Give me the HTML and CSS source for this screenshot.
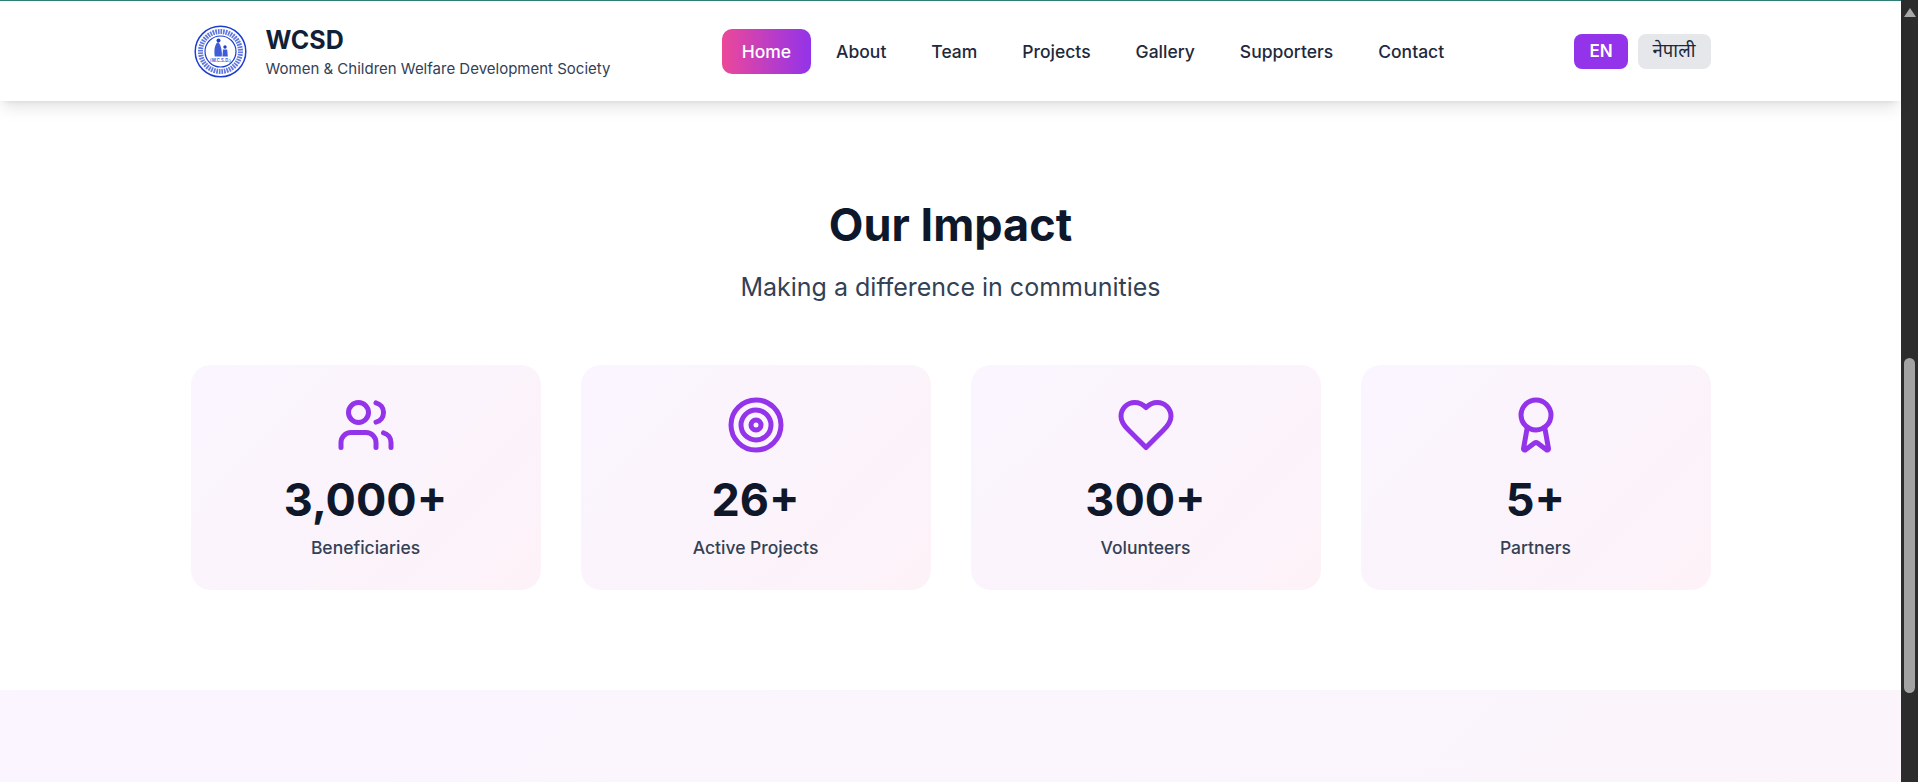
FILE: index.html
```html
<!DOCTYPE html>
<html>
<head>
    <title>WCSD</title>
    <meta charset="utf-8">
    <link rel="stylesheet" href="styles.css">
</head>
<body>
    <div class="page">
        <!-- Header -->
        <header class="site-header">
            <div class="header-inner">
                <a class="brand" href="#">
                    <svg class="brand-logo" viewBox="0 0 59 59" fill="none" stroke="#1d3fd1">
                        <circle cx="29.5" cy="29.5" r="25.3" stroke-width="1.5"/>
                        <circle cx="29.5" cy="29.5" r="20" stroke-width="5" stroke-dasharray="1.7 0.9" opacity="0.7"/>
                        <circle cx="29.5" cy="29.5" r="15.5" stroke-width="1.2"/>
                        <circle cx="27.5" cy="18.5" r="2" fill="#1d3fd1" stroke="none"/>
                        <path d="M26 20.5c-2.400 3-3.200 8.500-2.200 14h7c.5-4.500-.5-10.500-3-14z" fill="#1d3fd1" stroke="none" opacity="0.85"/>
                        <circle cx="34" cy="25" r="1.700" fill="#1d3fd1" stroke="none"/>
                        <path d="M32 27.500h4.200l.6 7h-5.400z" fill="#1d3fd1" stroke="none" opacity="0.85"/>
                        <text class="logo-text" x="29.500" y="39.800" text-anchor="middle">(W.C.S.D.)</text>
                    </svg>
                    <div class="brand-text">
                        <span class="brand-name">WCSD</span>
                        <span class="brand-full">Women &amp; Children Welfare Development Society</span>
                    </div>
                </a>
                <nav class="main-nav">
                    <a class="nav-link active" href="#">Home</a>
                    <a class="nav-link" href="#">About</a>
                    <a class="nav-link" href="#">Team</a>
                    <a class="nav-link" href="#">Projects</a>
                    <a class="nav-link" href="#">Gallery</a>
                    <a class="nav-link" href="#">Supporters</a>
                    <a class="nav-link" href="#">Contact</a>
                </nav>
                <div class="lang-switch">
                    <button class="lang-btn lang-active">EN</button>
                    <button class="lang-btn">नेपाली</button>
                </div>
            </div>
        </header>

        <!-- Our Impact -->
        <section class="impact">
            <h2 class="section-title">Our Impact</h2>
            <p class="section-sub">Making a difference in communities</p>
            <div class="stat-grid">
                <div class="stat-card">
                    <svg class="stat-icon" viewBox="0 0 24 24">
                        <path d="M16 21v-2a4 4 0 0 0-4-4H6a4 4 0 0 0-4 4v2"/>
                        <circle cx="9" cy="7" r="4"/>
                        <path d="M22 21v-2a4 4 0 0 0-3-3.87"/>
                        <path d="M16 3.13a4 4 0 0 1 0 7.75"/>
                    </svg>
                    <div class="stat-number">3,000+</div>
                    <div class="stat-label">Beneficiaries</div>
                </div>
                <div class="stat-card">
                    <svg class="stat-icon" viewBox="0 0 24 24">
                        <circle cx="12" cy="12" r="10"/>
                        <circle cx="12" cy="12" r="6"/>
                        <circle cx="12" cy="12" r="2"/>
                    </svg>
                    <div class="stat-number">26+</div>
                    <div class="stat-label">Active Projects</div>
                </div>
                <div class="stat-card">
                    <svg class="stat-icon" viewBox="0 0 24 24">
                        <path d="M19 14c1.49-1.46 3-3.21 3-5.5A5.5 5.5 0 0 0 16.5 3c-1.76 0-3 .5-4.5 2-1.5-1.5-2.74-2-4.5-2A5.5 5.5 0 0 0 2 8.5c0 2.3 1.5 4.05 3 5.5l7 7Z"/>
                    </svg>
                    <div class="stat-number">300+</div>
                    <div class="stat-label">Volunteers</div>
                </div>
                <div class="stat-card">
                    <svg class="stat-icon" viewBox="0 0 24 24">
                        <path d="m15.477 12.89 1.515 8.526a.5.5 0 0 1-.81.47l-3.58-2.687a1 1 0 0 0-1.197 0l-3.586 2.686a.5.5 0 0 1-.81-.469l1.514-8.526"/>
                        <circle cx="12" cy="8" r="6"/>
                    </svg>
                    <div class="stat-number">5+</div>
                    <div class="stat-label">Partners</div>
                </div>
            </div>
        </section>

        <!-- Next section, only its top shows -->
        <section class="next-section"></section>
    </div>

    <!-- Browser scrollbar -->
    <div class="scrollbar">
        <div class="scroll-arrow"></div>
        <div class="scroll-thumb"></div>
    </div>
</body>
</html>
```

FILE: styles.css
```css
* {
    box-sizing: border-box;
}
html,
body {
    height: 100%;
}
body {
    display: flex;
    margin: 0;
    overflow: hidden;
    font-family: "Inter", "Noto Sans", Arial, sans-serif;
    background-color: #fff;
    color: #0f172a;
}
.page {
    flex: 1;
    display: flex;
    flex-direction: column;
    min-width: 0;
    border-top: 1px solid #2f7f78;
}

/* Header */
.site-header {
    position: relative;
    z-index: 2;
    height: 100px;
    flex-shrink: 0;
    background-color: #fff;
    box-shadow: 0 10px 15px -3px rgba(0, 0, 0, 0.1), 0 4px 6px -4px rgba(0, 0, 0, 0.1);
}
.header-inner {
    display: flex;
    align-items: center;
    justify-content: space-between;
    width: 1520px;
    height: 100%;
    margin: 0 auto;
}
.brand {
    display: flex;
    align-items: center;
    gap: 16px;
    text-decoration: none;
}
.brand-logo {
    width: 59px;
    height: 59px;
}
.logo-text {
    font-size: 4.2px;
    font-weight: 600;
    fill: #1d3fd1;
    stroke: none;
}
.brand-text {
    display: flex;
    flex-direction: column;
    padding-top: 2px;
}
.brand-name {
    font-size: 25px;
    line-height: 32px;
    font-weight: 700;
    color: #111f38;
}
.brand-full {
    margin-top: 2px;
    font-size: 15px;
    line-height: 22px;
    color: #334155;
}
.main-nav {
    display: flex;
    align-items: center;
    gap: 5px;
    margin-left: 1px;
}
.nav-link {
    padding: 12px 20px;
    border-radius: 10px;
    font-size: 17.5px;
    line-height: 21px;
    font-weight: 500;
    color: #1e293b;
    text-decoration: none;
}
.nav-link.active {
    background: linear-gradient(90deg, #ec4899, #9333ea);
    color: #fff;
}
.lang-switch {
    display: flex;
    gap: 10px;
}
.lang-btn {
    height: 35px;
    padding: 0 15px 3px;
    border: none;
    border-radius: 8px;
    background-color: #e5e7eb;
    font-family: inherit;
    font-size: 18.5px;
    font-weight: 400;
    color: #1e293b;
}
.lang-btn.lang-active {
    padding: 0 15px;
    background-color: #9333ea;
    font-size: 17px;
    font-weight: 600;
    color: #fff;
}

/* Our Impact */
.impact {
    flex-shrink: 0;
    height: 589px;
    padding-top: 94px;
    text-align: center;
}
.section-title {
    margin: 0;
    font-size: 45px;
    line-height: 60px;
    font-weight: 700;
    color: #0f172a;
}
.section-sub {
    margin: 16px 0 0;
    font-size: 25px;
    line-height: 32px;
    color: #334155;
}
.stat-grid {
    display: grid;
    grid-template-columns: repeat(4, 350px);
    gap: 40px;
    justify-content: center;
    margin-top: 62px;
}
.stat-card {
    display: flex;
    flex-direction: column;
    align-items: center;
    height: 225px;
    padding-top: 30px;
    border-radius: 20px;
    background: linear-gradient(135deg, #faf5ff, #fdf2f8);
}
.stat-icon {
    width: 60px;
    height: 60px;
    fill: none;
    stroke: #9333ea;
    stroke-width: 2;
    stroke-linecap: round;
    stroke-linejoin: round;
}
.stat-number {
    margin-top: 15px;
    font-size: 45px;
    line-height: 60px;
    font-weight: 700;
    color: #0f172a;
}
.stat-label {
    margin-top: 6px;
    font-size: 17.5px;
    line-height: 24px;
    font-weight: 500;
    color: #334155;
}

.next-section {
    flex: 1;
    background: linear-gradient(135deg, #faf5ff, #fbf4fb);
}

/* Scrollbar */
.scrollbar {
    display: flex;
    flex-direction: column;
    align-items: center;
    width: 17px;
    flex-shrink: 0;
    background-color: #2c2c2c;
}
.scroll-arrow {
    width: 0;
    height: 0;
    margin-top: 8px;
    border-left: 6px solid transparent;
    border-right: 6px solid transparent;
    border-bottom: 9px solid #a8a8a8;
}
.scroll-thumb {
    width: 11px;
    height: 335px;
    margin-top: 341px;
    border-radius: 6px;
    background-color: #a3a3a3;
}
```
